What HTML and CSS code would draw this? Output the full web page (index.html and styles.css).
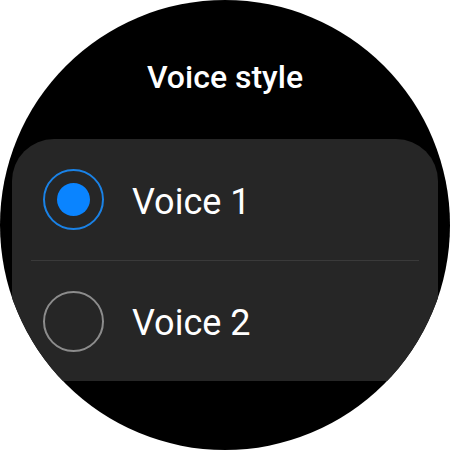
FILE: index.html
```html
<!DOCTYPE html>
<html>
<head>
<meta charset="utf-8">
<link rel="stylesheet" href="styles.css">
</head>
<body>
<div class="watch">
  <h1 class="title">Voice style</h1>
  <div class="card">
    <div class="row">
      <span class="radio radio-on"><span class="dot"></span></span>
      <span class="label">Voice 1</span>
    </div>
    <div class="divider"></div>
    <div class="row">
      <span class="radio radio-off"></span>
      <span class="label">Voice 2</span>
    </div>
  </div>
</div>
</body>
</html>
```
FILE: styles.css
```css
html, body {
  margin: 0;
  padding: 0;
  background: #ffffff;
}
.watch {
  width: 450px;
  height: 450px;
  border-radius: 50%;
  background: #000000;
  overflow: hidden;
  display: flex;
  flex-direction: column;
  font-family: Roboto, "Liberation Sans", sans-serif;
  color: #ffffff;
}
.title {
  flex: none;
  margin: 0;
  padding-top: 59px;
  height: 139px;
  box-sizing: border-box;
  text-align: center;
  font-size: 32px;
  font-weight: 500;
  line-height: 36px;
}
.card {
  flex: none;
  margin: 0 12px;
  height: 242px;
  background: #262626;
  border-radius: 42px 42px 0 0;
  display: flex;
  flex-direction: column;
}
.row {
  flex: none;
  height: 121px;
  display: flex;
  align-items: center;
  padding-left: 31px;
}
.row:last-child {
  height: 120px;
}
.divider {
  flex: none;
  height: 1px;
  margin: 0 19px;
  background: #3a3a3a;
}
.radio {
  width: 61px;
  height: 61px;
  box-sizing: border-box;
  border-radius: 50%;
  display: flex;
  align-items: center;
  justify-content: center;
  flex: none;
}
.radio-on {
  border: 2px solid #1a82e6;
}
.radio-off {
  border: 2px solid #8c8c8c;
}
.dot {
  width: 33px;
  height: 33px;
  border-radius: 50%;
  background: #0a84ff;
}
.label {
  margin-left: 28px;
  margin-top: 4px;
  font-size: 36px;
  font-weight: 400;
  line-height: 40px;
}
```
